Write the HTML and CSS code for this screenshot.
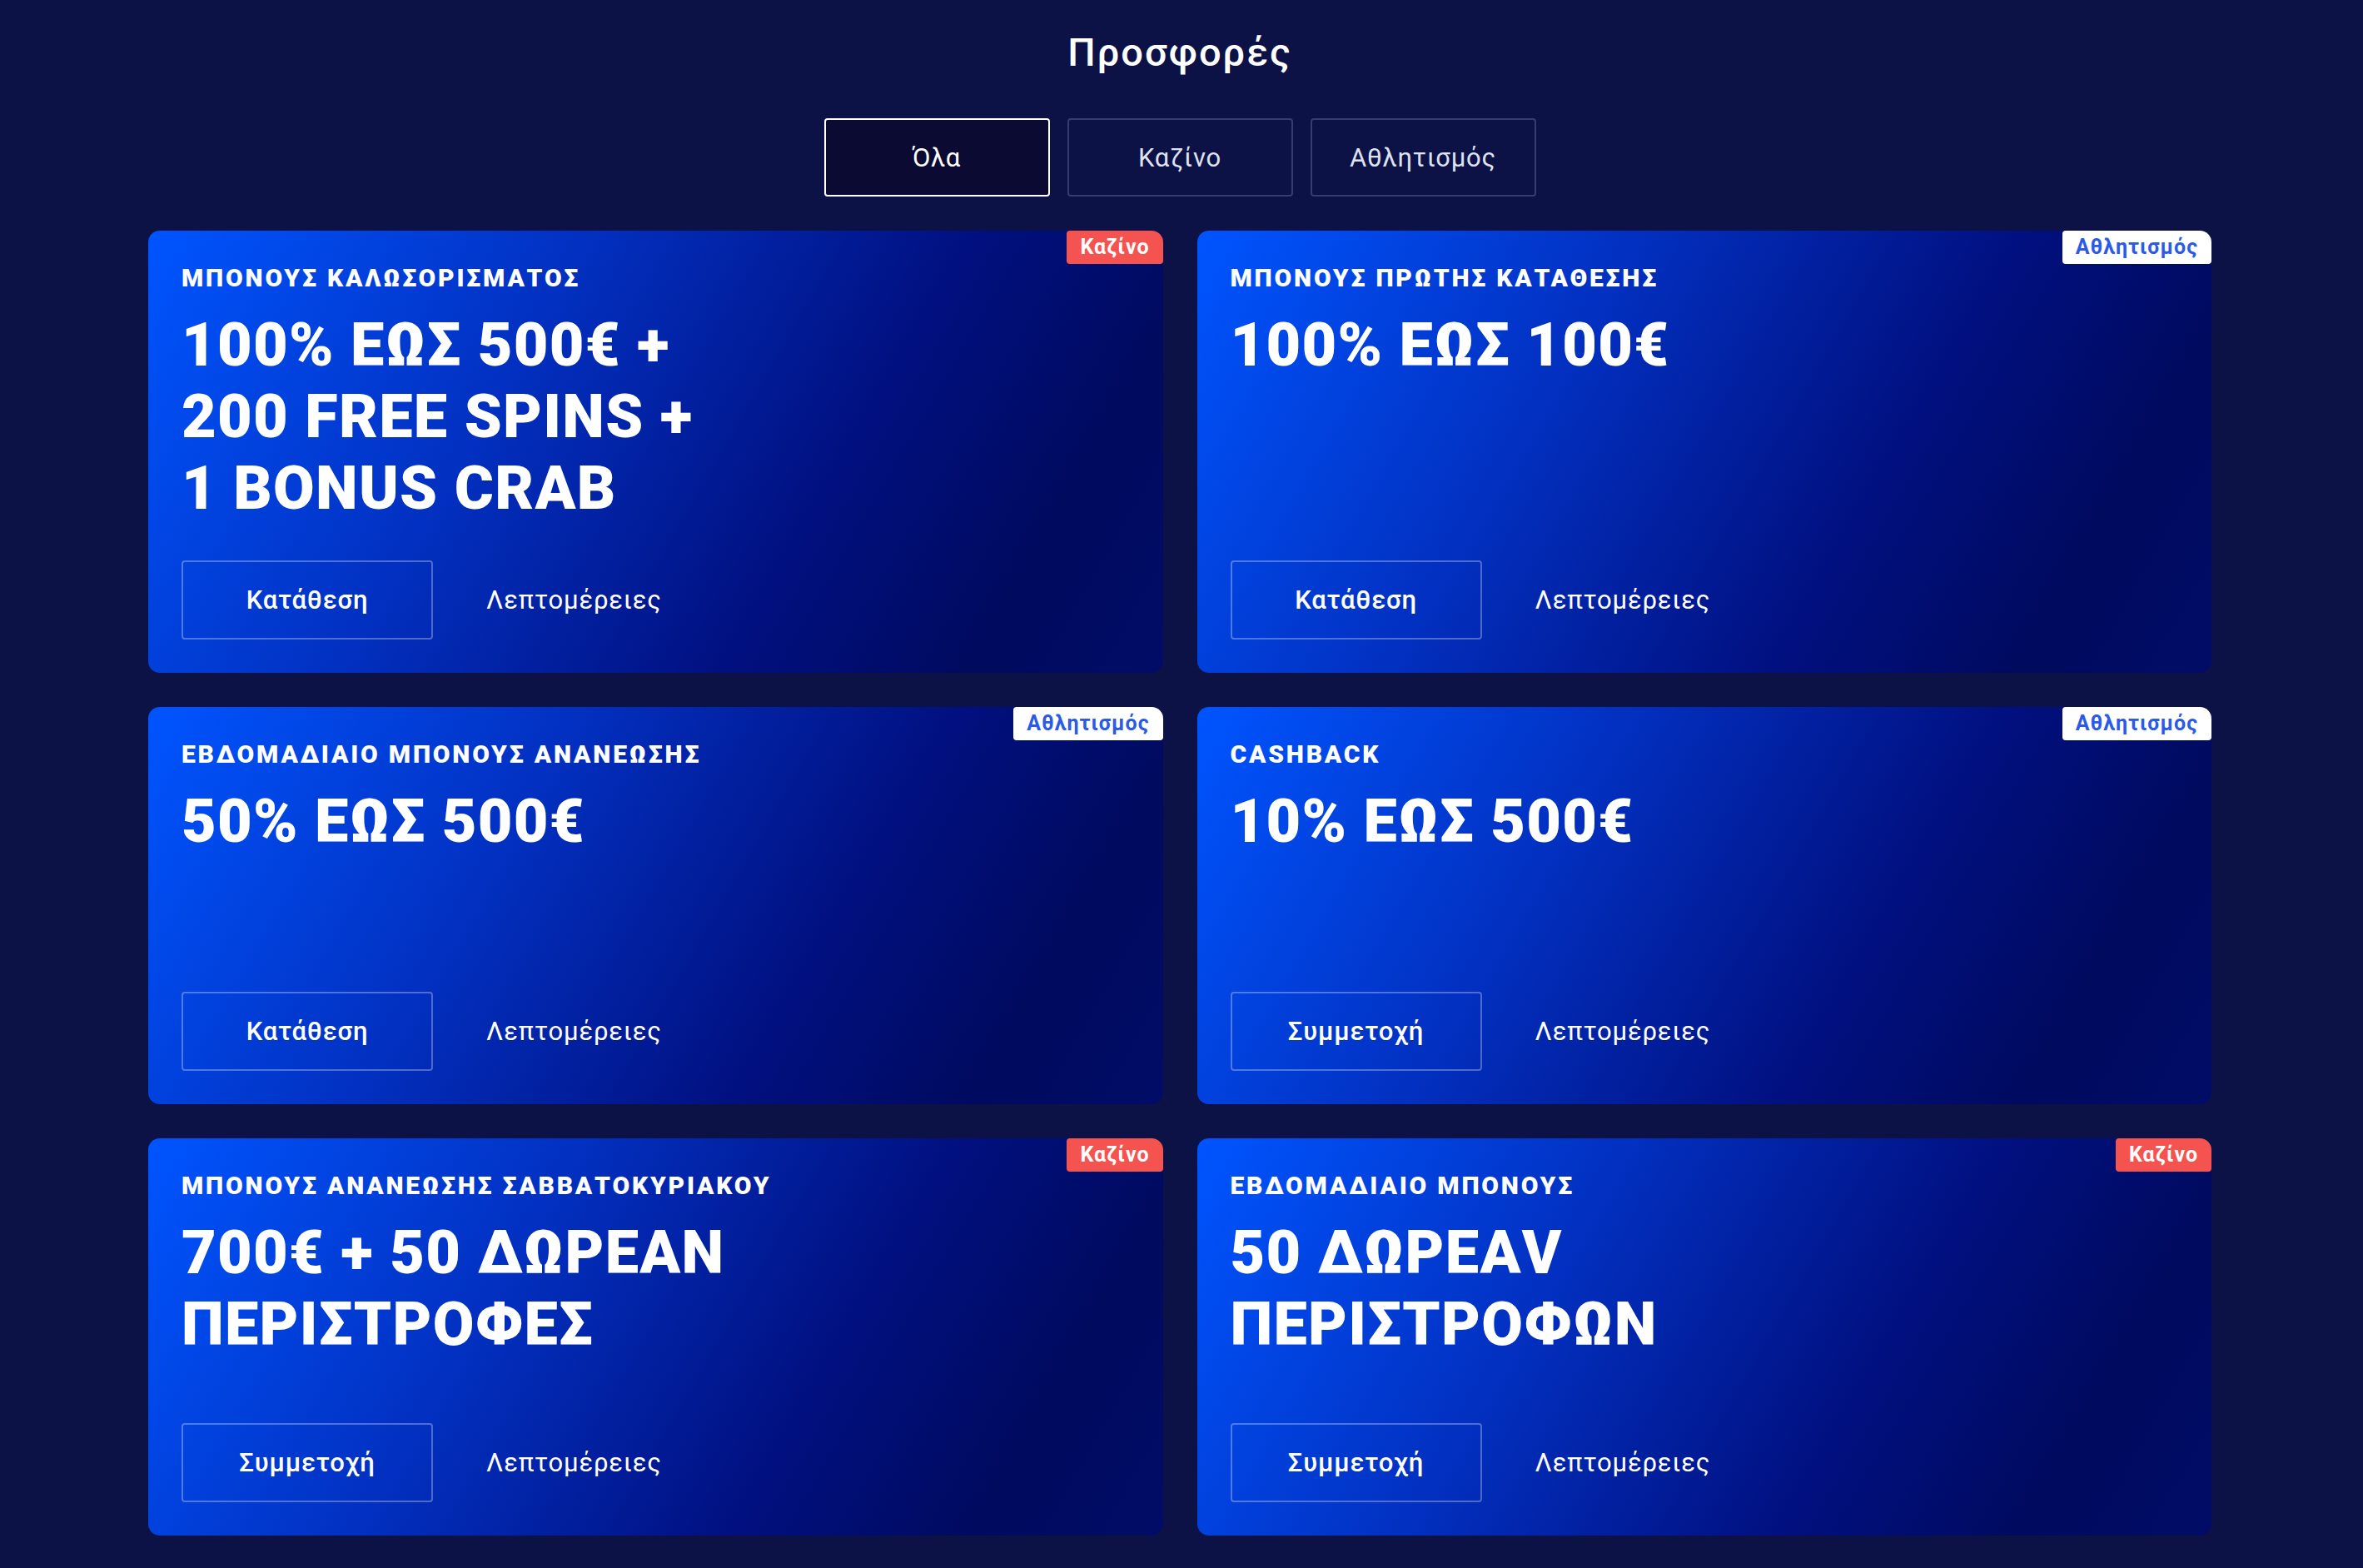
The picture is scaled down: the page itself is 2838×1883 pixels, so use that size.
FILE: index.html
```html
<!DOCTYPE html>
<html lang="el">
<head>
<meta charset="UTF-8">
<meta name="viewport" content="width=device-width, initial-scale=1.0">
<title>Προσφορές</title>
<link rel="stylesheet" href="styles.css">
</head>
<body>
    <h1 class="page-title">Προσφορές</h1>

    <div class="tabs">
        <button class="tab active">Όλα</button>
        <button class="tab">Καζίνο</button>
        <button class="tab">Αθλητισμός</button>
    </div>

    <div class="offers">
        <div class="offer">
            <span class="badge casino">Καζίνο</span>
            <div class="offer-label">ΜΠΟΝΟΥΣ ΚΑΛΩΣΟΡΙΣΜΑΤΟΣ</div>
            <div class="offer-title">100% ΕΩΣ 500€ +<br>200 FREE SPINS +<br>1 BONUS CRAB</div>
            <div class="offer-actions">
                <a class="btn" href="#">Κατάθεση</a>
                <a class="details" href="#">Λεπτομέρειες</a>
            </div>
        </div>

        <div class="offer">
            <span class="badge sport">Αθλητισμός</span>
            <div class="offer-label">ΜΠΟΝΟΥΣ ΠΡΩΤΗΣ ΚΑΤΑΘΕΣΗΣ</div>
            <div class="offer-title">100% ΕΩΣ 100€</div>
            <div class="offer-actions">
                <a class="btn" href="#">Κατάθεση</a>
                <a class="details" href="#">Λεπτομέρειες</a>
            </div>
        </div>

        <div class="offer">
            <span class="badge sport">Αθλητισμός</span>
            <div class="offer-label">ΕΒΔΟΜΑΔΙΑΙΟ ΜΠΟΝΟΥΣ ΑΝΑΝΕΩΣΗΣ</div>
            <div class="offer-title">50% ΕΩΣ 500€</div>
            <div class="offer-actions">
                <a class="btn" href="#">Κατάθεση</a>
                <a class="details" href="#">Λεπτομέρειες</a>
            </div>
        </div>

        <div class="offer">
            <span class="badge sport">Αθλητισμός</span>
            <div class="offer-label">CASHBACK</div>
            <div class="offer-title">10% ΕΩΣ 500€</div>
            <div class="offer-actions">
                <a class="btn" href="#">Συμμετοχή</a>
                <a class="details" href="#">Λεπτομέρειες</a>
            </div>
        </div>

        <div class="offer">
            <span class="badge casino">Καζίνο</span>
            <div class="offer-label">ΜΠΟΝΟΥΣ ΑΝΑΝΕΩΣΗΣ ΣΑΒΒΑΤΟΚΥΡΙΑΚΟΥ</div>
            <div class="offer-title">700€ + 50 ΔΩΡΕΑΝ<br>ΠΕΡΙΣΤΡΟΦΕΣ</div>
            <div class="offer-actions">
                <a class="btn" href="#">Συμμετοχή</a>
                <a class="details" href="#">Λεπτομέρειες</a>
            </div>
        </div>

        <div class="offer">
            <span class="badge casino">Καζίνο</span>
            <div class="offer-label">ΕΒΔΟΜΑΔΙΑΙΟ ΜΠΟΝΟΥΣ</div>
            <div class="offer-title">50 ΔΩΡΕΑV<br>ΠΕΡΙΣΤΡΟΦΩΝ</div>
            <div class="offer-actions">
                <a class="btn" href="#">Συμμετοχή</a>
                <a class="details" href="#">Λεπτομέρειες</a>
            </div>
        </div>
    </div>
</body>
</html>
```

FILE: styles.css
```css
body {
    margin: 0;
    padding: 35px 4px 40px 0;
    font-family: Roboto, "Liberation Sans", sans-serif;
    color: white;
    background-color: #0d1246;
}

.page-title {
    margin: 0;
    text-align: center;
    font-size: 47px;
    font-weight: 500;
    letter-spacing: 2px;
}

.tabs {
    display: flex;
    justify-content: center;
    gap: 21px;
    margin-top: 52px;
}
.tab {
    width: 271px;
    height: 94px;
    font-family: inherit;
    font-size: 31px;
    letter-spacing: 0.8px;
    color: #dfe2f0;
    background-color: transparent;
    border: 2px solid #373c6c;
    border-radius: 4px;
    cursor: pointer;
}
.tab.active {
    color: white;
    background-color: #0a0a32;
    border-color: white;
}

.offers {
    display: grid;
    grid-template-columns: 1fr 1fr;
    gap: 41px;
    width: 2478px;
    margin: 41px auto 0;
}

.offer {
    position: relative;
    display: flex;
    flex-direction: column;
    min-height: 477px;
    box-sizing: border-box;
    padding: 40px;
    border-radius: 14px;
    background: linear-gradient(120deg, #0055ff 0%, #0230c0 35%, #011080 65%, #000a5e 85%, #010c66 100%);
}

/* category tag pinned to the top right corner */
.badge {
    position: absolute;
    top: 0;
    right: 0;
    height: 40px;
    line-height: 40px;
    padding: 0 16px;
    font-size: 25px;
    font-weight: 700;
    letter-spacing: 1px;
    border-radius: 4px 14px 4px 4px;
}
.badge.casino {
    background-color: #f5534f;
    color: white;
}
.badge.sport {
    background-color: white;
    color: #2b5be4;
}

.offer-label {
    font-size: 30px;
    font-weight: 900;
    letter-spacing: 2.8px;
    line-height: 34px;
}
.offer-title {
    margin-top: 21px;
    font-size: 72px;
    font-weight: 900;
    line-height: 86px;
    letter-spacing: 1.3px;
}

.offer-actions {
    display: flex;
    align-items: center;
    margin-top: auto;
    padding-top: 43px;
}
.btn {
    display: flex;
    align-items: center;
    justify-content: center;
    width: 302px;
    height: 95px;
    box-sizing: border-box;
    border: 2px solid rgba(255, 255, 255, 0.3);
    border-radius: 4px;
    font-size: 31px;
    font-weight: 500;
    letter-spacing: 0.8px;
    color: white;
    text-decoration: none;
}
.details {
    margin-left: 64px;
    font-size: 31px;
    letter-spacing: 0.8px;
    color: white;
    text-decoration: none;
}
```
